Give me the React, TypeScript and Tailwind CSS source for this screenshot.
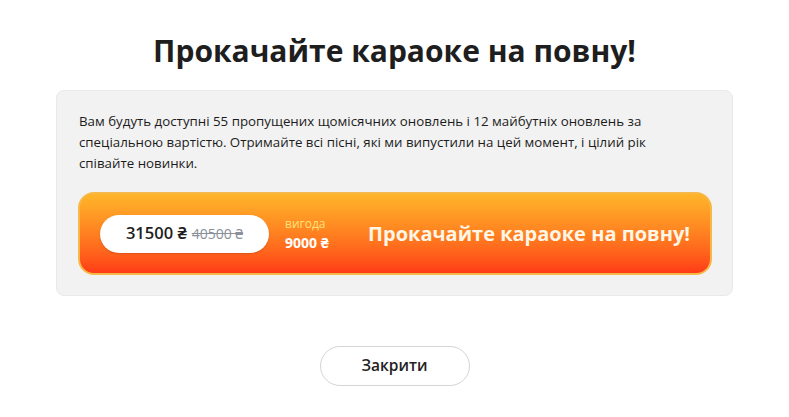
import React from "react";

export default function App() {
  return (
    <div
      className="w-[789px] h-[417px] bg-white flex flex-col items-center"
      style={{ fontFamily: '"Open Sans", "Noto Sans", sans-serif' }}
    >
      <h1 className="mt-[32px] text-[30px] leading-[38px] font-bold text-[#1e1e1e]">
        Прокачайте караоке на повну!
      </h1>
      <div className="mt-[20px] w-[677px] h-[206px] rounded-[8px] bg-[#f2f2f2] border border-[#e9e9e9] pl-[22px] pr-[21px] pt-[20px]">
        <p className="w-[600px] text-[13.3px] leading-[21px] text-[#1c1c1c]">
          Вам будуть доступні 55 пропущених щомісячних оновлень і 12 майбутніх оновлень за спеціальною вартістю. Отримайте всі пісні, які ми випустили на цей момент, і цілий рік співайте новинки.
        </p>
        <div className="mt-[18px] -ml-[1px] h-[83px] w-[634px] rounded-[16px] border-2 border-[#f7b84a] bg-gradient-to-b from-[#ffb52a] to-[#ff3a17] flex items-center pl-[20px] pr-[20px]">
          <div className="h-[38px] w-[169px] rounded-full bg-white flex items-center justify-center gap-[5px] shadow-[0_1px_2px_rgba(0,0,0,0.15)]">
            <span className="text-[16.5px] font-semibold text-[#1e1e1e]">31500 ₴</span>
            <span className="text-[14px] text-[#8a8f9a] line-through">40500 ₴</span>
          </div>
          <div className="ml-[16px] flex flex-col leading-none">
            <span className="text-[12px] text-[#ffe27a]">вигода</span>
            <span className="mt-[6px] text-[14px] font-bold text-white">9000 ₴</span>
          </div>
          <div className="flex-1 text-right text-[20px] font-bold text-[#fff6e6]">
            Прокачайте караоке на повну!
          </div>
        </div>
      </div>
      <button className="mt-[50px] w-[150px] h-[40px] rounded-full border border-[#d4d4d4] bg-white text-[15.5px] font-semibold text-[#222222]">
        Закрити
      </button>
    </div>
  );
}
